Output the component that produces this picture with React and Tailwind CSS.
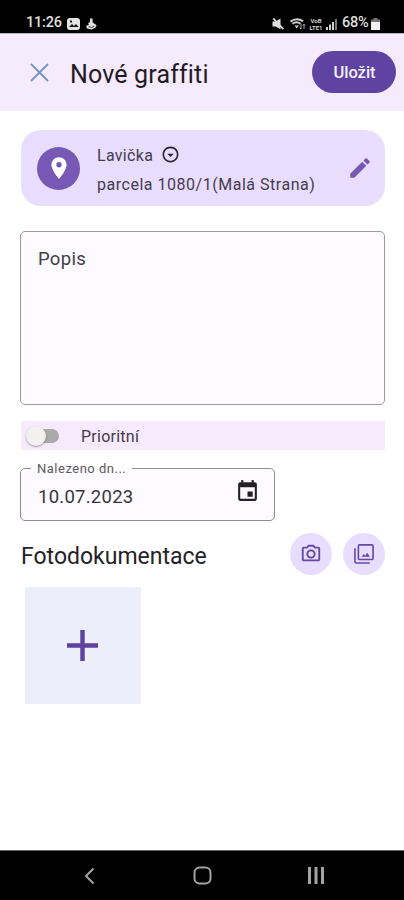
import React from 'react';
import {
  MdAdd,
  MdEdit,
  MdEvent,
  MdOutlineArrowDropDownCircle,
  MdOutlinePhotoCamera,
  MdPlace,
} from 'react-icons/md';

function StatusBar() {
  return (
    <div className="flex h-[33px] shrink-0 items-center bg-black pt-[14px] pr-[24px] pb-0 pl-[26px] text-[14.5px] leading-none font-medium text-[#dedede]">
      <span className="w-[41px] tracking-[-0.2px] whitespace-nowrap">11:26</span>
      <svg className="h-3 w-[13px]" viewBox="0 0 13 12">
        <rect width="13" height="12" rx="3" fill="#e4e4e4" />
        <path d="M2 9l3-3 2 2 2-2 2.5 3z" fill="#111" />
        <rect x="3" y="2.5" width="2" height="2" fill="#111" />
      </svg>
      <svg className="ml-[6px] h-3 w-[11px]" viewBox="0 0 11 12" fill="#dedede">
        <path d="M4 0.5h2.6v4L9 6l1.6 1.2-1.2 2.6L5.5 11.6 1 10.4 0 8l3-1.6L2 5l2-1z" />
        <path d="M2.5 8.6l3 .8 3-1.2" fill="none" stroke="#222" strokeWidth="0.8" />
      </svg>
      <div className="ml-auto flex items-center">
        <svg className="h-3 w-3" viewBox="0 0 12 12">
          <path d="M0.5 3.5h3L8.5 0.5v10.8L3.5 8.5h-3z" fill="#dedede" />
          <path d="M1.2 0.4L11.4 11.2" stroke="#dedede" strokeWidth="1.8" />
        </svg>
        <svg className="ml-[6px] h-3 w-4" viewBox="0 0 16 12" fill="none" stroke="#cfcfcf">
          <path d="M0.5 3.6Q6.5-1 13 3.2M2.5 5.8Q6.5 2.8 10.5 5.8" strokeWidth="2" />
          <path d="M4.5 7.5h4.4l-2.2 3z" fill="#cfcfcf" stroke="none" />
          <path d="M11 6v5M9.8 9.6l1.2 1.4M14 11V6.4M12.8 7.6L14 6.2l1.2 1.4" strokeWidth="0.8" />
        </svg>
        <div className="ml-[2px] flex h-[14px] w-[16px] flex-col items-center text-[6px] leading-[7px] font-bold text-[#cfcfcf]">
          <span>VoB</span>
          <span>LTE1</span>
        </div>
        <svg className="ml-[2px] h-3 w-[11px]" viewBox="0 0 11 12" fill="#cfcfcf">
          <path d="M0 9h2v3H0zM3 6.5h2V12H3zM6 4h2v8H6z" />
          <path d="M9 1h2v11H9z" fill="#777" />
        </svg>
        <span className="ml-[5px] w-[27px] tracking-[-0.3px] whitespace-nowrap">68%</span>
        <svg className="ml-[2px] h-3 w-[9px]" viewBox="0 0 9 12">
          <path d="M2.5 0h4v1.5H9V4H0V1.5h2.5z" fill="#777" />
          <path d="M0 4h9v8H0z" fill="#f2f2f2" />
        </svg>
      </div>
    </div>
  );
}

function Header() {
  return (
    <header className="flex h-[78px] shrink-0 items-center border-t border-[#b9b3bd] bg-[#f6eafd] pr-2 pb-[2px] pl-[30px]">
      <svg className="mt-[2px] h-[19px] w-[19px]" viewBox="0 0 19 19" stroke="#7292c4" strokeWidth="1.8">
        <path d="M1 1l17 17M18 1L1 18" />
      </svg>
      <h1 className="mt-[5px] ml-[21px] text-[25px] leading-none tracking-[0.15px] whitespace-nowrap text-[#1f1a24]">
        Nové graffiti
      </h1>
      <button className="ml-auto h-[42px] w-[84px] rounded-full bg-[#5f43a3] pt-[4px] pl-px text-[16.5px] font-medium text-[#f7f2ff]">
        Uložit
      </button>
    </header>
  );
}

function LocationCard() {
  return (
    <section className="flex h-[76px] items-center rounded-[20px] bg-[#e9ddfd] pr-[12px] pl-4">
      <div className="flex h-[43px] w-[43px] items-center justify-center rounded-full bg-[#7759b5]">
        <MdPlace className="h-[26px] w-[26px] text-white" />
      </div>
      <div className="mt-[4px] ml-[17px] text-[16px] leading-[29px] tracking-[0.52px] whitespace-nowrap text-[#443c4f]">
        <div className="flex items-center">
          <span className="tracking-[0.3px]">Lavička</span>
          <MdOutlineArrowDropDownCircle className="mt-[-2px] ml-[8px] h-[19px] w-[19px] text-[#28222f]" />
        </div>
        <div>parcela 1080/1(Malá Strana)</div>
      </div>
      <MdEdit className="ml-auto h-[26px] w-[26px] text-[#7658b3]" />
    </section>
  );
}

function PriorityRow() {
  return (
    <div className="mt-[16px] flex h-[29px] items-center bg-[#f7eafd] pl-[5px]">
      <div className="flex h-[14px] w-[33px] items-center rounded-full bg-linear-to-r from-transparent from-30% to-[#aaa] to-30%">
        <span className="h-5 w-5 rounded-full bg-[#f3f1f0] shadow-[0_1px_2px_rgba(0,0,0,0.35)]" />
      </div>
      <span className="mt-[2px] ml-[22px] text-[16px] leading-none tracking-[0.25px] text-[#443b4b]">Prioritní</span>
    </div>
  );
}

function DateField() {
  return (
    <fieldset className="mt-[10px] flex h-[61px] w-[255px] rounded-[5px] border border-[#8e8e8e] bg-[#fdfbff] pl-[10px]">
      <legend className="h-4 px-[6px] pt-px text-[13px] leading-4 tracking-[0.5px] text-[#5d5961]">Nalezeno dn...</legend>
      <div className="flex h-[38px] items-center pl-[7px] text-[18.5px] tracking-[0.25px] text-[#38343c]">
        <span className="mt-[6px] w-[197px]">10.07.2023</span>
        <MdEvent className="mt-[-7px] h-[25px] w-[25px] text-[#242027]" />
      </div>
    </fieldset>
  );
}

function PhotoLibraryIcon() {
  return (
    <svg className="mr-px h-[20px] w-[20px]" viewBox="0 0 21 21" fill="none" stroke="currentColor" strokeWidth="1.7">
      <rect x="4.6" y="0.9" width="15.4" height="15.4" rx="1.2" />
      <path d="M1 4.4v14.2c0 .8.6 1.4 1.4 1.4h14.2" />
      <path d="M8 13.4l2.3-3 1.5 2 2-3.2 3 4.2z" fill="currentColor" stroke="none" />
    </svg>
  );
}

function RoundButton({ children }) {
  return (
    <button className="flex h-[42px] w-[42px] items-center justify-center rounded-full bg-[#e9ddfd] text-[#6549a6]">
      {children}
    </button>
  );
}

function NavBar() {
  return (
    <nav className="flex h-[50px] shrink-0 items-center border-t border-[#666] bg-black pl-[84px] text-[#a3a3a3]">
      <svg className="h-[18px] w-[11px]" viewBox="0 0 11 18" fill="none" stroke="currentColor" strokeWidth="2">
        <path d="M9.5 1.5L2 9l7.5 7.5" />
      </svg>
      <svg className="ml-[98px] h-[19px] w-[19px]" viewBox="0 0 19 19" fill="none" stroke="currentColor" strokeWidth="2">
        <rect x="1.5" y="1.5" width="16" height="16" rx="5" />
      </svg>
      <svg className="ml-[96px] h-[17px] w-4" viewBox="0 0 16 17" fill="currentColor">
        <path d="M0 0h3v17H0zM6.5 0h3v17h-3zM13 0h3v17h-3z" />
      </svg>
    </nav>
  );
}

export default function App() {
  return (
    <div className="flex h-[900px] w-[404px] flex-col overflow-hidden bg-white font-[Roboto,sans-serif]">
      <StatusBar />
      <Header />
      <main className="flex-1 pt-[19px] pr-[19px] pl-[20px]">
        <div className="pl-px">
          <LocationCard />
        </div>
        <div className="mt-[25px] h-[174px] rounded-[5px] border border-[#9b9b9b] bg-[#fdfbff] px-[17px] pt-[15px] text-[18.5px] leading-6 tracking-[0.3px] text-[#423e46]">
          Popis
        </div>
        <div className="pl-px">
          <PriorityRow />
        </div>
        <DateField />
        <div className="mt-[12px] flex items-center pl-px">
          <h2 className="mt-[5px] text-[23px] leading-none text-[#252128]">Fotodokumentace</h2>
          <div className="ml-auto flex gap-[11px]">
            <RoundButton>
              <MdOutlinePhotoCamera className="h-[22px] w-[22px]" />
            </RoundButton>
            <RoundButton>
              <PhotoLibraryIcon />
            </RoundButton>
          </div>
        </div>
        <div className="mt-[12px] ml-[5px] flex h-[117px] w-[116px] items-center justify-center bg-[#eceefa] pr-px pb-px">
          <MdAdd className="h-[53px] w-[53px] text-[#5f3fa0]" />
        </div>
      </main>
      <NavBar />
    </div>
  );
}
